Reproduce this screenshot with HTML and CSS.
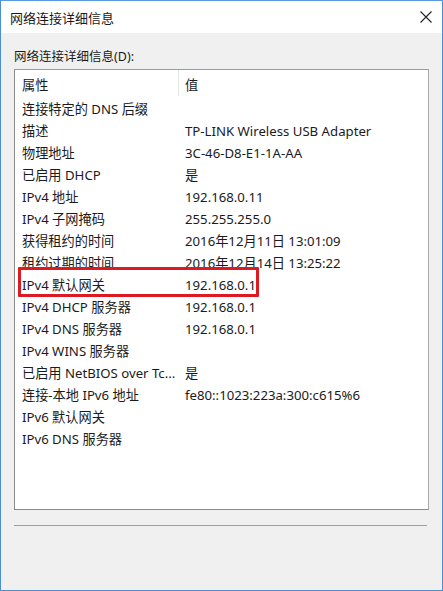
FILE: index.html
```html
<!DOCTYPE html>
<html lang="zh-CN">
<head>
<meta charset="utf-8">
<title>网络连接详细信息</title>
<link rel="stylesheet" href="styles.css">
</head>
<body>
<div class="window">
  <div class="titlebar">
    <span class="title">网络连接详细信息</span>
    <svg class="close" width="12" height="12" viewBox="0 0 12 12"><path d="M0.5 0.5 L11.5 11.5 M11.5 0.5 L0.5 11.5" stroke="#222" stroke-width="1.1" fill="none"/></svg>
  </div>
  <div class="body">
    <div class="label">网络连接详细信息(D):</div>
    <div class="listbox">
      <div class="row header"><div class="c1">属性</div><div class="c2">值</div></div>
      <div class="row"><div class="c1">连接特定的 DNS 后缀</div><div class="c2"></div></div>
      <div class="row"><div class="c1">描述</div><div class="c2">TP-LINK Wireless USB Adapter</div></div>
      <div class="row"><div class="c1">物理地址</div><div class="c2">3C-46-D8-E1-1A-AA</div></div>
      <div class="row"><div class="c1">已启用 DHCP</div><div class="c2">是</div></div>
      <div class="row"><div class="c1">IPv4 地址</div><div class="c2">192.168.0.11</div></div>
      <div class="row"><div class="c1">IPv4 子网掩码</div><div class="c2">255.255.255.0</div></div>
      <div class="row"><div class="c1">获得租约的时间</div><div class="c2">2016年12月11日 13:01:09</div></div>
      <div class="row"><div class="c1">租约过期的时间</div><div class="c2">2016年12月14日 13:25:22</div></div>
      <div class="row"><div class="c1">IPv4 默认网关</div><div class="c2">192.168.0.1</div></div>
      <div class="row"><div class="c1">IPv4 DHCP 服务器</div><div class="c2">192.168.0.1</div></div>
      <div class="row"><div class="c1">IPv4 DNS 服务器</div><div class="c2">192.168.0.1</div></div>
      <div class="row"><div class="c1">IPv4 WINS 服务器</div><div class="c2"></div></div>
      <div class="row"><div class="c1">已启用 NetBIOS over Tc...</div><div class="c2">是</div></div>
      <div class="row"><div class="c1">连接-本地 IPv6 地址</div><div class="c2">fe80::1023:223a:300:c615%6</div></div>
      <div class="row"><div class="c1">IPv6 默认网关</div><div class="c2"></div></div>
      <div class="row"><div class="c1">IPv6 DNS 服务器</div><div class="c2"></div></div>
      <div class="highlight"></div>
    </div>
    <div class="separator"></div>
  </div>
</div>
</body>
</html>
```

FILE: styles.css
```css
html, body {
  margin: 0;
  padding: 0;
  background: #f0f0f0;
}
.window {
  width: 443px;
  height: 591px;
  box-sizing: border-box;
  border: 1px solid #4a8fd6;
  border-top-color: #5a9ae0;
  background: #f0f0f0;
  font-family: "Noto Sans", "Noto Sans CJK SC", sans-serif;
  font-size: 12.5px;
  color: #1b1b1b;
  display: flex;
  flex-direction: column;
}
.titlebar {
  height: 32px;
  background: #ffffff;
  display: flex;
  align-items: center;
  justify-content: space-between;
  padding: 0 10px 0 9px;
  flex: none;
}
.title {
  font-size: 13px;
  color: #1a1a1a;
}
.body {
  flex: 1;
  padding: 14px 12px 0 13px;
  display: flex;
  flex-direction: column;
}
.label {
  height: 22px;
  line-height: 20px;
}
.listbox {
  position: relative;
  height: 441px;
  border: 1px solid #8a8a8a;
  border-color: #9a9a9a #a8a8a8 #8a8a8a #8a8a8a;
  background: #ffffff;
  margin-right: 1px;
  box-sizing: border-box;
  font-size: 13.2px;
}
.row {
  display: flex;
  height: 22px;
  line-height: 22px;
}
.row.header {
  height: 28px;
  line-height: 30px;
  align-items: flex-start;
}
.c1 {
  width: 164px;
  box-sizing: border-box;
  padding-left: 7px;
  white-space: nowrap;
  overflow: hidden;
}
.c2 {
  padding-left: 6px;
  white-space: nowrap;
}
.header .c1 {
  height: 26px;
  border-right: 1px solid #e3e3e3;
  overflow: visible;
}
.highlight {
  position: absolute;
  left: 3px;
  top: 197px;
  width: 241px;
  height: 30px;
  box-sizing: border-box;
  border: 3px solid #dd1a22;
  border-radius: 1px;
}
.separator {
  margin-top: 15px;
  height: 1px;
  background: #a0a0a0;
  margin-right: 3px;
}
```
